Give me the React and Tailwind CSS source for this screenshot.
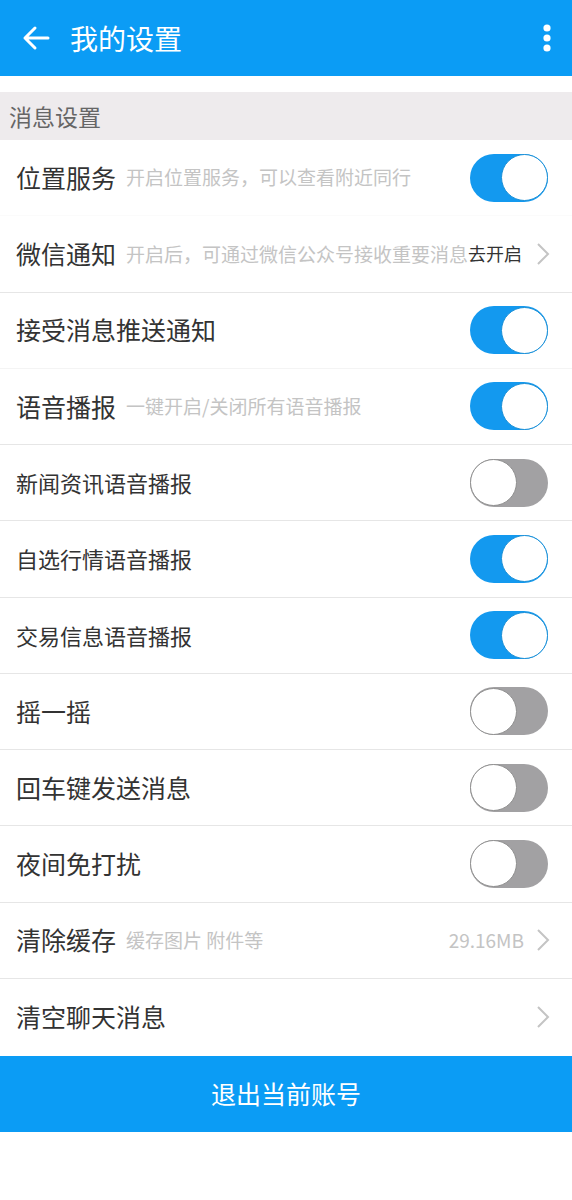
import React from "react";

const font = { fontFamily: '"Noto Sans CJK SC", "Noto Sans", sans-serif' };

function Toggle({ on }) {
  return (
    <div
      className={
        on
          ? "w-[78px] h-[48px] rounded-full bg-[#1399ef] flex items-center justify-end"
          : "w-[78px] h-[48px] rounded-full bg-[#a2a1a3] flex items-center justify-start"
      }
    >
      <div
        className={
          on
            ? "w-[47px] h-[47px] rounded-full bg-white border-[1.5px] border-[#1a8fd6]"
            : "w-[47px] h-[47px] rounded-full bg-white border-[1.5px] border-[#8f8f8f]"
        }
      />
    </div>
  );
}

function Chevron() {
  return (
    <svg width="14" height="24" viewBox="0 0 14 24" className="ml-3 shrink-0">
      <path d="M2 2 L12 12 L2 22" fill="none" stroke="#c4c4c4" strokeWidth="2" />
    </svg>
  );
}

function Row({ title, desc, big = true, toggle, line = "border-[#e6e6e6]" }) {
  return (
    <div className={`h-[76.25px] flex items-center pl-4 pr-[24px] border-b ${line} bg-white`}>
      <div className="flex-1 flex items-center min-w-0 overflow-hidden whitespace-nowrap">
        <span className={big ? "text-[25px] text-[#333333]" : "text-[22px] text-[#333333]"}>{title}</span>
        {desc && <span className="ml-[10px] text-[19px] text-[#c4c4c4]">{desc}</span>}
      </div>
      {toggle !== undefined && <Toggle on={toggle} />}
    </div>
  );
}

export default function App() {
  return (
    <div className="w-[572px] min-h-[1200px] bg-white" style={font}>
      <div className="h-[76px] bg-[#0b9cf5] flex items-center px-[22px]">
        <svg width="28" height="26" viewBox="0 0 28 26" className="shrink-0">
          <path d="M26 13 H3 M13 3 L3 13 L13 23" fill="none" stroke="white" strokeWidth="3" strokeLinecap="round" strokeLinejoin="round" />
        </svg>
        <span className="ml-[20px] text-[28px] text-white">我的设置</span>
        <div className="flex-1" />
        <svg width="10" height="30" viewBox="0 0 10 30" className="mr-[-2px]">
          <circle cx="5" cy="5" r="3.6" fill="white" />
          <circle cx="5" cy="15" r="3.6" fill="white" />
          <circle cx="5" cy="25" r="3.6" fill="white" />
        </svg>
      </div>
      <div className="h-[16px]" />
      <div className="h-[48px] bg-[#eeebed] flex items-center pl-[9px] text-[23px] text-[#666666]">消息设置</div>

      <Row title="位置服务" desc="开启位置服务，可以查看附近同行" toggle={true} line="border-[#fbfbfb]" />
      <div className="h-[76.25px] flex items-center pl-4 pr-[22px] border-b border-[#e6e6e6] bg-white whitespace-nowrap overflow-hidden">
        <span className="text-[25px] text-[#333333]">微信通知</span>
        <span className="ml-[10px] text-[19px] text-[#c4c4c4] w-[343px] overflow-hidden shrink-0">开启后，可通过微信公众号接收重要消息</span>
        <span className="text-[18px] text-[#333333] -ml-[1px]">去开启</span>
        <div className="flex-1" />
        <Chevron />
      </div>
      <Row title="接受消息推送通知" toggle={true} line="border-[#f4f4f4]" />
      <Row title="语音播报" desc="一键开启/关闭所有语音播报" toggle={true} />
      <Row title="新闻资讯语音播报" big={false} toggle={false} />
      <Row title="自选行情语音播报" big={false} toggle={true} />
      <Row title="交易信息语音播报" big={false} toggle={true} />
      <Row title="摇一摇" toggle={false} />
      <Row title="回车键发送消息" toggle={false} />
      <Row title="夜间免打扰" toggle={false} />
      <div className="h-[76.25px] flex items-center pl-4 pr-[22px] border-b border-[#e6e6e6] bg-white whitespace-nowrap">
        <span className="text-[25px] text-[#333333]">清除缓存</span>
        <span className="ml-[10px] text-[19px] text-[#c4c4c4]">缓存图片 附件等</span>
        <div className="flex-1" />
        <span className="text-[19px] text-[#c4c4c4]">29.16MB</span>
        <Chevron />
      </div>
      <div className="h-[76.25px] flex items-center pl-4 pr-[22px] bg-white whitespace-nowrap">
        <span className="text-[25px] text-[#333333]">清空聊天消息</span>
        <div className="flex-1" />
        <Chevron />
      </div>

      <div className="h-[76px] bg-[#0b9cf5] flex items-center justify-center text-[25px] text-white mt-[1px]">
        退出当前账号
      </div>
    </div>
  );
}
